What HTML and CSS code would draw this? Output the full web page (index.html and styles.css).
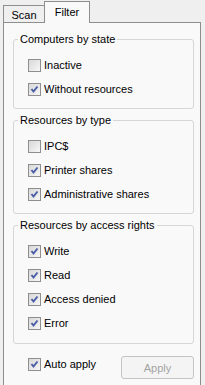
FILE: index.html
```html
<!DOCTYPE html>
<html lang="en">
<head>
    <meta charset="UTF-8">
    <title>Filter</title>
    <link rel="stylesheet" href="styles.css">
</head>
<body>
    <div class="tabs">
        <div class="tab">Scan</div>
        <div class="tab active">Filter</div>
    </div>

    <div class="panel">
        <fieldset class="group">
            <legend>Computers by state</legend>
            <label class="item"><span class="box"></span>Inactive</label>
            <label class="item"><span class="box checked"></span>Without resources</label>
        </fieldset>

        <fieldset class="group">
            <legend>Resources by type</legend>
            <label class="item"><span class="box"></span>IPC$</label>
            <label class="item"><span class="box checked"></span>Printer shares</label>
            <label class="item"><span class="box checked"></span>Administrative shares</label>
        </fieldset>

        <fieldset class="group last">
            <legend>Resources by access rights</legend>
            <label class="item"><span class="box checked"></span>Write</label>
            <label class="item"><span class="box checked"></span>Read</label>
            <label class="item"><span class="box checked"></span>Access denied</label>
            <label class="item"><span class="box checked"></span>Error</label>
        </fieldset>

        <div class="footer">
            <label class="item"><span class="box checked"></span>Auto apply</label>
            <button class="apply" disabled>Apply</button>
        </div>
    </div>
</body>
</html>
```

FILE: styles.css
```css
html, body {
    overflow: hidden;
}

body {
    font-family: "Liberation Sans", Arial, sans-serif;
    font-size: 11px;
    line-height: 13px;
    color: #000;
    margin: 0;
    padding: 0;
    background-color: #efefef;
}

.tabs {
    display: flex;
    align-items: flex-end;
    height: 23px;
    padding-left: 3px;
}

    .tabs .tab {
        box-sizing: border-box;
        width: 41px;
        height: 17px;
        margin-bottom: 1px;
        border: 1px solid #8e8e8e;
        border-right: none;
        border-bottom: none;
        text-align: center;
        line-height: 16px;
        padding-top: 1px;
    }

    .tabs .tab.active {
        position: relative;
        z-index: 1;
        width: 46px;
        height: 22px;
        margin-bottom: 0;
        border-right: 1px solid #8e8e8e;
        background-color: #f9f9f9;
        padding-top: 2px;
        line-height: 16px;
    }

.panel {
    box-sizing: border-box;
    height: 380px;
    margin: -1px 4px 0 3px;
    padding: 10px 6px 0 9px;
    border: 1px solid #8e8e8e;
    background-color: #f9f9f9;
}

.group {
    margin: 0 0 5px 0;
    padding: 7px 0 7px 4px;
    border: 1px solid #d6d6d6;
    border-radius: 3px;
}

    .group legend {
        padding: 0 2px;
    }

    .group .item {
        height: 24px;
        margin-left: 10px;
    }

    .group.last {
        padding-bottom: 8px;
    }

.item {
    display: flex;
    align-items: center;
}

.box {
    box-sizing: border-box;
    width: 13px;
    height: 13px;
    margin-right: 3px;
    border: 1px solid #8f8f8f;
    background: linear-gradient(135deg, #d8d8d8, #f7f7f7);
}

    .box.checked {
        background: url("data:image/svg+xml,%3Csvg xmlns='http://www.w3.org/2000/svg' width='11' height='11'%3E%3Cpolyline points='2.5,5 4.5,7.5 8.5,2.5' fill='none' stroke='%234b5ea6' stroke-width='2'/%3E%3C/svg%3E") no-repeat, linear-gradient(135deg, #d8d8d8, #f7f7f7);
    }

.footer {
    display: flex;
    justify-content: space-between;
    align-items: flex-start;
    padding: 7px 0 0 15px;
}

    .footer .item {
        height: 16px;
    }

.apply {
    box-sizing: border-box;
    width: 73px;
    height: 23px;
    border: 1px solid #c4c4c4;
    border-radius: 3px;
    background-color: #f4f4f4;
    color: #a3a3a3;
    font-family: "Liberation Sans", Arial, sans-serif;
    font-size: 11px;
    padding: 0;
}
```
